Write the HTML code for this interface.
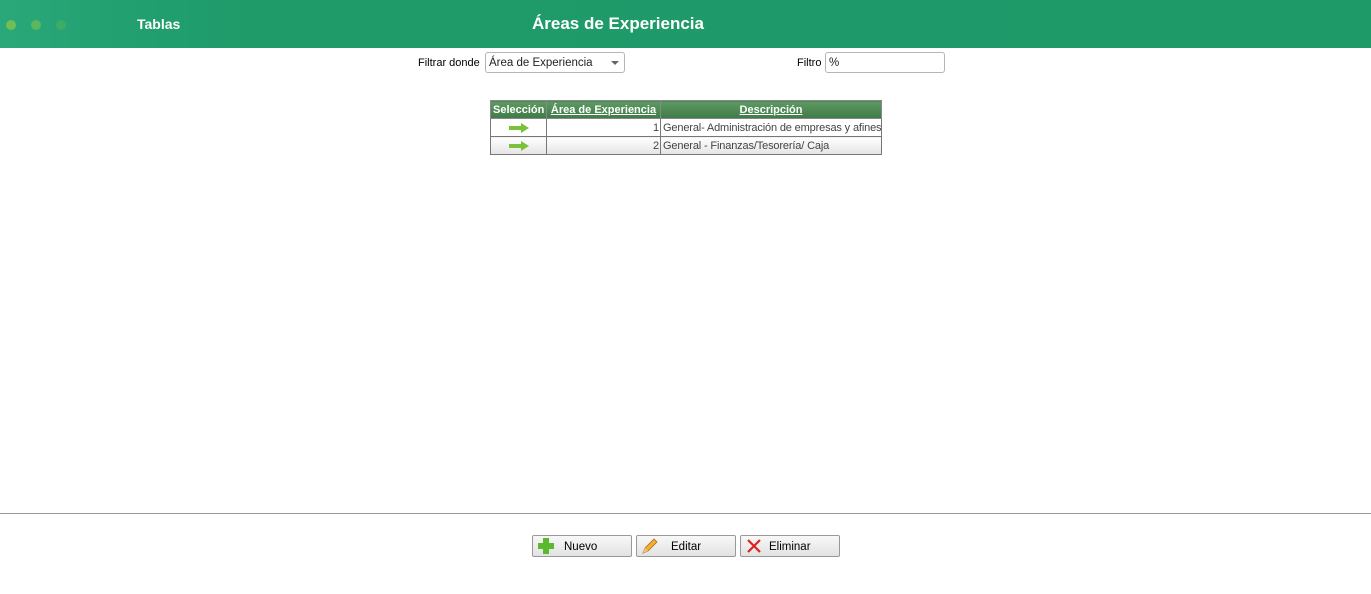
<!DOCTYPE html>
<html><head><meta charset="utf-8"><style>
body{margin:0;width:1371px;height:594px;background:#fff;font-family:"Liberation Sans",sans-serif;position:relative;overflow:hidden}
.hdr{position:absolute;left:0;top:0;width:1371px;height:48px;background:linear-gradient(90deg,#2aa87a 0,#22a070 120px,#1f9b6a 250px,#1e9a69 100%)}
.dot{position:absolute;top:20px;width:10px;height:10px;border-radius:50%}
.t{position:absolute;color:#fff;font-weight:bold}
.lbl{position:absolute;font-size:11px;color:#000}
.box{position:absolute;border:1px solid #b5b5b5;border-radius:3px;height:21px;box-sizing:border-box;font-size:11.5px;padding:4px 3px;color:#222}
table{position:absolute;left:490px;top:100px;border-collapse:collapse;font-size:11px;table-layout:fixed;width:391px}
th{background:linear-gradient(#5e9a62,#3f7a48);color:#fff;height:17px;padding:0 2px;border:1px solid #888;text-decoration:underline;font-size:11px;white-space:nowrap;overflow:hidden}
th:first-child{text-decoration:none}
td{border:1px solid #777;height:17px;padding:0 1px 0 2px;color:#444;white-space:nowrap;overflow:hidden;letter-spacing:-0.15px}
tr.r2 td{background:linear-gradient(#fff,#e4e4e4)}
.arr{display:block;margin:auto;width:20px;height:10px}
.btn{position:absolute;top:535px;width:100px;height:22px;box-sizing:border-box;border:1px solid #999;border-radius:2px;background:linear-gradient(#f8f8f8,#e2e2e2);font-size:11.5px;color:#000}
.btn span{position:absolute;top:5px}
</style></head><body>
<div class="hdr">
<div class="dot" style="left:6px;background:#6fbf56"></div>
<div class="dot" style="left:31px;background:#5bb75e"></div>
<div class="dot" style="left:56px;background:#3eab66"></div>
<div class="t" style="left:137px;top:16px;font-size:14px">Tablas</div>
<div class="t" style="left:532px;top:14px;font-size:17px">Áreas de Experiencia</div>
</div>
<div class="lbl" style="left:418px;top:57px">Filtrar donde</div>
<div class="box" style="left:485px;top:52px;width:140px">Área de Experiencia<span style="position:absolute;right:5px;top:8px;border:4px solid transparent;border-top:4px solid #666;border-bottom:0"></span></div>
<div class="lbl" style="left:797px;top:57px">Filtro</div>
<div class="box" style="left:825px;top:52px;width:120px">%</div>
<table>
<colgroup><col style="width:56px"><col style="width:114px"><col style="width:221px"></colgroup>
<tr><th>Selección</th><th>Área de Experiencia</th><th>Descripción</th></tr>
<tr><td><svg class="arr" viewBox="0 0 20 10"><path d="M0 3h12V0l8 5-8 5V7H0z" fill="#7cc13a"/></svg></td><td style="text-align:right">1</td><td>General- Administración de empresas y afines</td></tr>
<tr class="r2"><td><svg class="arr" viewBox="0 0 20 10"><path d="M0 3h12V0l8 5-8 5V7H0z" fill="#7cc13a"/></svg></td><td style="text-align:right">2</td><td>General - Finanzas/Tesorería/ Caja</td></tr>
</table>
<div style="position:absolute;left:0;top:513px;width:1371px;height:1px;background:#999"></div>
<div class="btn" style="left:532px"><svg style="position:absolute;left:5px;top:2px" width="16" height="16" viewBox="0 0 16 16"><path d="M5 0h6v5h5v6h-5v5H5v-5H0V5h5z" fill="#5cb82e"/></svg><span style="left:31px">Nuevo</span></div>
<div class="btn" style="left:636px"><svg style="position:absolute;left:4px;top:2px" width="18" height="17" viewBox="0 0 18 17"><path d="M2 15l2-5L13 1l3 3-9 9z" fill="#f0b030" stroke="#b07020" stroke-width=".8"/><path d="M2 15l2-5 3 3z" fill="#e8c890"/></svg><span style="left:34px">Editar</span></div>
<div class="btn" style="left:740px"><svg style="position:absolute;left:6px;top:3px" width="14" height="14" viewBox="0 0 14 14"><path d="M1 1l12 12M13 1L1 13" stroke="#e02020" stroke-width="2.2"/></svg><span style="left:28px">Eliminar</span></div>
</body></html>
